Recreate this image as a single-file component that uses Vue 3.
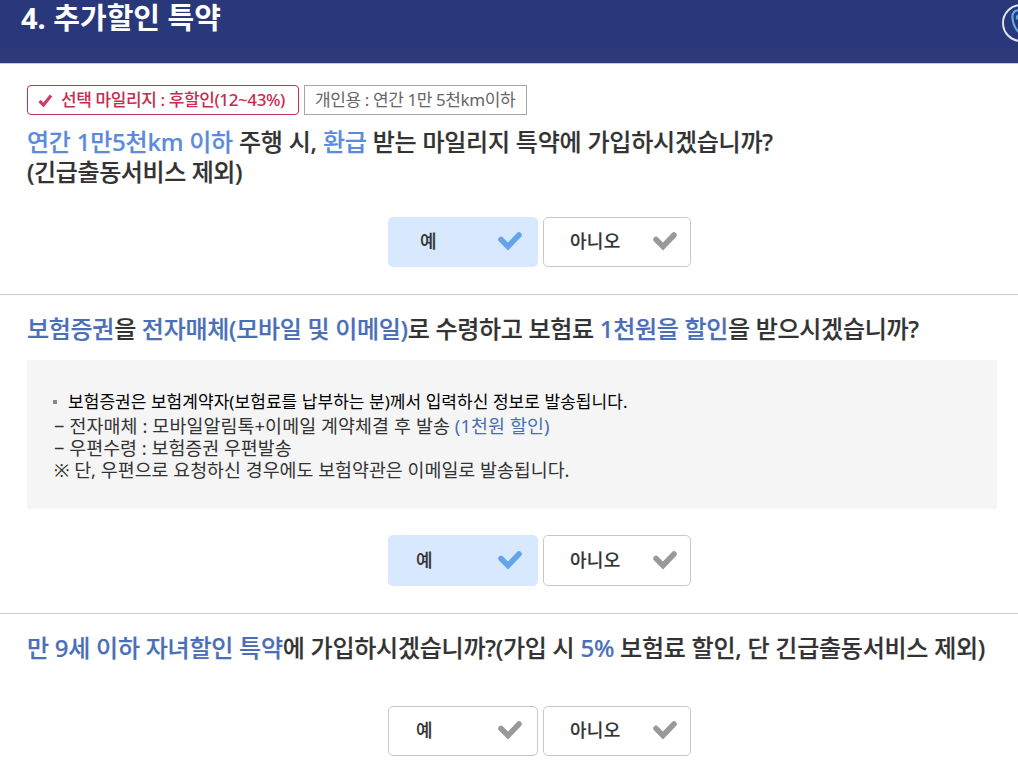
<script setup>
import { reactive } from 'vue'

const answers = reactive({ mileage: 'yes', delivery: 'yes', child: '' })

function choose(key, value) {
  answers[key] = value
}
</script>

<template>
  <div class="page">
    <header class="head">
      <h1 class="head-title">4. 추가할인 특약</h1>
      <svg class="head-icon" width="38" height="38" viewBox="0 0 38 38" fill="none" aria-hidden="true">
        <circle cx="19" cy="19" r="18" stroke="#dfe3f3" stroke-width="2" />
        <path
          d="M17 6.5c-4-.8-7 2.500-6.500 7.500.5 7 4 13 9.500 17"
          stroke="#62a8e4"
          stroke-width="2.200"
        />
        <path d="M17 11c-2 0-2.500 2-2 4.500" stroke="#62a8e4" stroke-width="2" />
      </svg>
    </header>

    <!-- Mileage -->
    <section class="item item-mileage">
      <div class="tags">
        <span class="tag tag-on">
          <svg class="tag-check" width="15" height="13" viewBox="0 0 15 13" fill="none" aria-hidden="true">
            <path d="M1.500 7 5.500 11 13 1.500" stroke="#cb3f65" stroke-width="3.200" />
          </svg>
          <span>선택 마일리지 : 후할인(12~43%)</span>
        </span>
        <span class="tag"><span>개인용 : 연간 1만 5천km이하</span></span>
      </div>
      <h2 class="question q-mileage">
        <span class="sky">연간 1만5천km 이하</span> 주행 시, <span class="sky">환급</span> 받는 마일리지 특약에 가입하시겠습니까?<br />
        <span class="q-sub">(긴급출동서비스 제외)</span>
      </h2>
      <div class="choices">
        <button class="choice yes first" :class="{ on: answers.mileage === 'yes' }" @click="choose('mileage', 'yes')">
          <span>예</span>
          <svg class="check" width="26" height="20" viewBox="0 0 26 20" fill="none" aria-hidden="true">
            <path d="M4 8.500 11 15.500 22 4" stroke="currentColor" stroke-width="5.500" stroke-linecap="round" />
          </svg>
        </button>
        <button class="choice no" :class="{ on: answers.mileage === 'no' }" @click="choose('mileage', 'no')">
          <span>아니오</span>
          <svg class="check" width="26" height="20" viewBox="0 0 26 20" fill="none" aria-hidden="true">
            <path d="M4 8.500 11 15.500 22 4" stroke="currentColor" stroke-width="5.500" stroke-linecap="round" />
          </svg>
        </button>
      </div>
    </section>

    <!-- Policy delivery -->
    <section class="item item-delivery">
      <h2 class="question q-delivery">
        <span class="blue">보험증권</span>을 <span class="blue">전자매체(모바일 및 이메일)</span>로 수령하고 보험료 <span class="blue">1천원을 할인</span>을 받으시겠습니까?
      </h2>
      <div class="notice">
        <p class="notice-lead">보험증권은 보험계약자(보험료를 납부하는 분)께서 입력하신 정보로 발송됩니다.</p>
        <p class="notice-line line-media">− 전자매체 : 모바일알림톡+이메일 계약체결 후 발송 <span class="blue">(1천원 할인)</span></p>
        <p class="notice-line">− 우편수령 : 보험증권 우편발송</p>
        <p class="notice-line">※ 단, 우편으로 요청하신 경우에도 보험약관은 이메일로 발송됩니다.</p>
      </div>
      <div class="choices tall">
        <button class="choice yes" :class="{ on: answers.delivery === 'yes' }" @click="choose('delivery', 'yes')">
          <span>예</span>
          <svg class="check" width="26" height="20" viewBox="0 0 26 20" fill="none" aria-hidden="true">
            <path d="M4 8.500 11 15.500 22 4" stroke="currentColor" stroke-width="5.500" stroke-linecap="round" />
          </svg>
        </button>
        <button class="choice no" :class="{ on: answers.delivery === 'no' }" @click="choose('delivery', 'no')">
          <span>아니오</span>
          <svg class="check" width="26" height="20" viewBox="0 0 26 20" fill="none" aria-hidden="true">
            <path d="M4 8.500 11 15.500 22 4" stroke="currentColor" stroke-width="5.500" stroke-linecap="round" />
          </svg>
        </button>
      </div>
    </section>

    <!-- Child discount -->
    <section class="item item-child">
      <h2 class="question q-child">
        <span class="blue">만 9세 이하 자녀할인 특약</span>에 가입하시겠습니까?(가입 시 <span class="blue">5%</span> 보험료 할인, 단 긴급출동서비스 제외)
      </h2>
      <div class="choices">
        <button class="choice yes" :class="{ on: answers.child === 'yes' }" @click="choose('child', 'yes')">
          <span>예</span>
          <svg class="check" width="26" height="20" viewBox="0 0 26 20" fill="none" aria-hidden="true">
            <path d="M4 8.500 11 15.500 22 4" stroke="currentColor" stroke-width="5.500" stroke-linecap="round" />
          </svg>
        </button>
        <button class="choice no" :class="{ on: answers.child === 'no' }" @click="choose('child', 'no')">
          <span>아니오</span>
          <svg class="check" width="26" height="20" viewBox="0 0 26 20" fill="none" aria-hidden="true">
            <path d="M4 8.500 11 15.500 22 4" stroke="currentColor" stroke-width="5.500" stroke-linecap="round" />
          </svg>
        </button>
      </div>
    </section>
  </div>
</template>

<style>
body {
  margin: 0;
  background: #fff;
  overflow: hidden;
}
</style>

<style scoped>
.page {
  width: 1018px;
  height: 780px;
  overflow: hidden;
  font-family: 'Noto Sans', 'Noto Sans CJK KR', sans-serif;
  color: #333;
}

.head {
  display: flex;
  justify-content: space-between;
  box-sizing: border-box;
  height: 64px;
  padding-left: 21px;
  background: linear-gradient(#29387a 75%, #2f3c7d);
  border-bottom: 1px solid #c5c8d8;
  overflow: hidden;
}

.head-title {
  margin: 0;
  font-size: 29px;
  font-weight: 700;
  line-height: 36px;
  color: #fff;
  white-space: nowrap;
}

.head-icon {
  flex-shrink: 0;
  margin: 4px -22px 0 0;
}

.item {
  box-sizing: border-box;
  padding: 0 21px 0 27px;
  border-bottom: 1px solid #ccc;
}
.item-mileage {
  height: 231px;
  padding-top: 21px;
}
.item-delivery {
  height: 319px;
  padding-top: 19px;
}
.item-child {
  height: 166px;
  padding-top: 19px;
  border-bottom: none;
}

.tags {
  display: flex;
  gap: 5px;
}

.tag {
  display: flex;
  align-items: center;
  box-sizing: border-box;
  width: 223px;
  height: 30px;
  padding-left: 10px;
  border: 1px solid #a5a5a5;
  font-size: 17px;
  line-height: 26px;
  letter-spacing: -0.4px;
  color: #666;
  white-space: nowrap;
}
.tag-on {
  width: 272px;
  gap: 8px;
  border-color: #c62d4e;
  border-radius: 4px;
  font-weight: 500;
  color: #c62d4e;
}

.question {
  margin: 0;
  font-size: 24px;
  font-weight: 500;
  line-height: 30px;
  letter-spacing: -0.3px;
  color: #333;
  white-space: nowrap;
  -webkit-text-stroke: 0.2px;
}
.q-mileage {
  margin-top: 12px;
  letter-spacing: -0.22px;
}
.q-sub {
  letter-spacing: -0.4px;
}
.q-child {
  letter-spacing: -0.25px;
}

.sky {
  color: #5a8bdc;
}
.blue {
  color: #4a6fb7;
}

.choices {
  display: flex;
  gap: 5px;
  height: 50px;
  margin: 30px 0 0 361px;
}
.choices.tall {
  height: 51px;
  margin-top: 26px;
}
.item-child .choices {
  margin-top: 43px;
}

.choice {
  display: flex;
  align-items: center;
  justify-content: space-between;
  box-sizing: border-box;
  width: 150px;
  padding: 0 14px 2px 27px;
  border: 1px solid #c8c8c8;
  border-radius: 5px;
  background: #fff;
  font-family: inherit;
  font-size: 18px;
  font-weight: 500;
  letter-spacing: 0.3px;
  color: #333;
  cursor: pointer;
  -webkit-text-stroke: 0.15px;
}
.choice span {
  padding-bottom: 2px;
}
.choice.first {
  padding-left: 31px;
}
.choice.no {
  width: 148px;
  padding-left: 26px;
  padding-right: 12px;
}
.choice.on {
  border-color: #d8e8ff;
  background: #d8e8ff;
}

.check {
  flex-shrink: 0;
  color: #999;
}
.on .check {
  color: #64a5ea;
}

.notice {
  box-sizing: border-box;
  height: 149px;
  margin-top: 16px;
  padding: 30px 26px 0;
  background: #f5f5f5;
  white-space: nowrap;
}
.notice p {
  margin: 0;
}
.notice-lead {
  display: flex;
  align-items: center;
  gap: 11px;
  font-size: 17px;
  line-height: 24px;
  letter-spacing: 0.05px;
  color: #000;
}
.notice-lead::before {
  content: '';
  width: 4px;
  height: 4px;
  background: #888;
}
.notice-line {
  padding-left: 1px;
  font-size: 18.4px;
  line-height: 22px;
  color: #333;
}
.line-media {
  line-height: 23px;
  letter-spacing: 0.1px;
}
</style>
